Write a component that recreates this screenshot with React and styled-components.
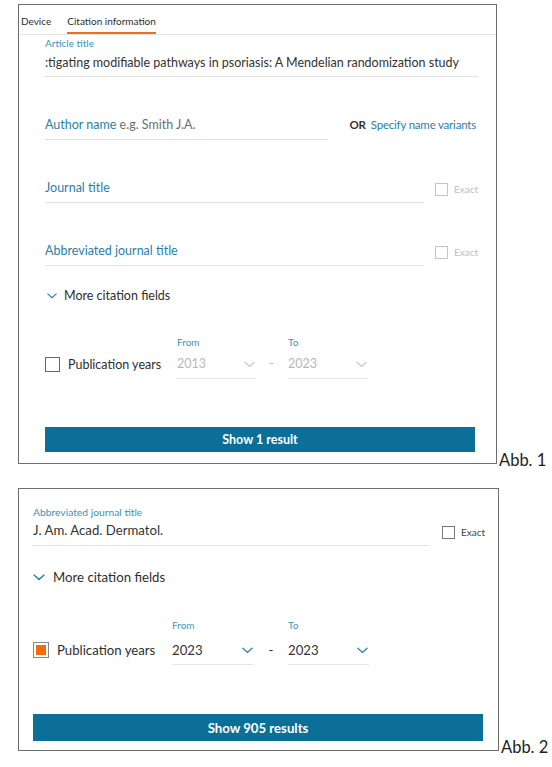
import React from 'react'
import styled, { createGlobalStyle } from 'styled-components'

const GlobalStyle = createGlobalStyle`
  body {
    margin: 0;
    background: #fff;
    font-family: Lato, "Liberation Sans", sans-serif;
    color: #2e2e2e;
  }
`

const Page = styled.div`
  display: flex;
  flex-direction: column;
  gap: 24px;
  padding: 4px 0 15px 18px;
`

const Figure = styled.div`
  display: flex;
  align-items: flex-end;
`

const Frame = styled.div`
  --fs: ${p => p.$fs}px;
  width: ${p => p.$w}px;
  box-sizing: border-box;
  border: 1px solid #6d6d6d;
  background: #fff;
  font-size: var(--fs);
`

const Caption = styled.div`
  font-size: 16.5px;
  line-height: 1;
  margin: 0 0 -4px 2px;
  color: #222;
`

const Tabs = styled.div`
  display: flex;
  gap: 16px;
  height: 29px;
  padding-left: 2px;
  border-bottom: 1px solid #e4e4e4;
  font-size: 10px;
`

const Tab = styled.div`
  display: flex;
  align-items: center;
  padding-top: 5px;
  box-sizing: border-box;
  border-bottom: 2px solid ${p => (p.$active ? '#e9711c' : 'transparent')};
`

const Body = styled.div`
  display: flex;
  flex-direction: column;
  padding: ${p => p.$pad};
`

const Row = styled.div`
  display: flex;
  align-items: flex-start;
  margin-top: ${p => p.$mt || 0}px;
`

const Field = styled.div`
  display: flex;
  flex-direction: column;
  width: ${p => (p.$w ? `${p.$w}px` : '100%')};
  padding-bottom: ${p => p.$pb || 5}px;
  border-bottom: 1px solid #e2e2e2;
`

const SmallLabel = styled.div`
  font-size: ${p => p.$size || 10}px;
  line-height: 12px;
  color: #3a95b8;
  margin-bottom: ${p => p.$gap || 0}px;
`

const Value = styled.div`
  line-height: 18px;
  white-space: nowrap;
  overflow: hidden;
  color: ${p => (p.$muted ? '#b8b8b8' : '#333')};
`

const Prompt = styled.span`
  color: #2a7fa8;
`

const Hint = styled.span`
  color: #6e6e6e;
`

const OrText = styled.div`
  margin-left: auto;
  margin-right: 2px;
  line-height: 18px;
  font-size: 11.5px;
  letter-spacing: -0.2px;
  b {
    font-weight: 700;
    color: #333;
    margin-right: 5px;
  }
`

const Exact = styled.label`
  display: flex;
  align-items: center;
  gap: 6px;
  height: 18px;
  align-self: flex-end;
  margin: 0 0 5px ${p => p.$ml}px;
  font-size: 10px;
  color: ${p => (p.$muted ? '#bdbdbd' : '#444')};
`

const Box = styled.span`
  display: inline-block;
  box-sizing: border-box;
  width: ${p => p.$size}px;
  height: ${p => p.$size}px;
  border: 1px solid ${p => p.$border};
  background: ${p => (p.$checked ? '#f5690f' : '#fff')};
  box-shadow: ${p => (p.$checked ? 'inset 0 0 0 2px #fff' : 'none')};
  flex-shrink: 0;
`

const More = styled.div`
  display: flex;
  align-items: center;
  gap: ${p => p.$gap}px;
  padding-left: ${p => p.$indent}px;
  line-height: 18px;
  margin-top: ${p => p.$mt}px;
`

const YearsRow = styled.div`
  display: flex;
  align-items: flex-end;
  margin-top: ${p => p.$mt}px;
`

const PubGroup = styled.div`
  display: flex;
  align-items: center;
  gap: 8px;
  width: ${p => p.$w}px;
  height: 18px;
  margin-bottom: 6px;
`

const Select = styled.div`
  display: flex;
  flex-direction: column;
  width: ${p => p.$w}px;
`

const SelectValue = styled.div`
  display: flex;
  align-items: center;
  justify-content: space-between;
  line-height: 18px;
  padding: 0 ${p => p.$pr}px 5px 0;
  border-bottom: 1px solid #e6e6e6;
  color: ${p => (p.$muted ? '#b8b8b8' : '#333')};
`

const Dash = styled.div`
  width: ${p => p.$w}px;
  text-align: center;
  line-height: 18px;
  margin-bottom: 6px;
  color: ${p => (p.$muted ? '#b8b8b8' : '#333')};
`

const Button = styled.div`
  width: ${p => p.$w}px;
  height: ${p => p.$h}px;
  margin-top: ${p => p.$mt}px;
  background: #0b6f98;
  color: #fff;
  font-weight: 700;
  display: flex;
  align-items: center;
  justify-content: center;
`

const Chevron = ({ color, w = 11 }) => (
  <svg width={w} height={Math.round(w * 0.6)} viewBox="0 0 12 7" fill="none">
    <path d="M1 1l5 4.6L11 1" stroke={color} strokeWidth="1.4" strokeLinecap="round" />
  </svg>
)

const Years = ({ disabled, mt, pubW, box, gap, fromW, dashW, toW, pr }) => {
  const chev = disabled ? '#c9c9c9' : '#2a7fa8'
  return (
    <YearsRow $mt={mt}>
      <PubGroup $w={pubW}>
        <Box $size={box} $border={disabled ? '#666' : '#888'} $checked={!disabled} />
        <span>Publication years</span>
      </PubGroup>
      <Select $w={fromW}>
        <SmallLabel $gap={gap}>From</SmallLabel>
        <SelectValue $muted={disabled} $pr={pr}>
          <span>{disabled ? '2013' : '2023'}</span>
          <Chevron color={chev} w={11} />
        </SelectValue>
      </Select>
      <Dash $w={dashW} $muted={disabled}>-</Dash>
      <Select $w={toW}>
        <SmallLabel $gap={gap}>To</SmallLabel>
        <SelectValue $muted={disabled} $pr={pr}>
          <span>2023</span>
          <Chevron color={chev} w={11} />
        </SelectValue>
      </Select>
    </YearsRow>
  )
}

export default function App() {
  return (
    <>
      <GlobalStyle />
      <Page>
        <Figure>
          <Frame $w={479} $fs={12.5}>
            <Tabs>
              <Tab>Device</Tab>
              <Tab $active>Citation information</Tab>
            </Tabs>
            <Body $pad="2px 18px 11px 26px">
              <Field $pb={4}>
                <SmallLabel $gap={5}>Article title</SmallLabel>
                <Value>:tigating modifiable pathways in psoriasis: A Mendelian randomization study</Value>
              </Field>
              <Row $mt={39}>
                <Field $w={283}>
                  <Value>
                    <Prompt>Author name</Prompt> <Hint>e.g. Smith J.A.</Hint>
                  </Value>
                </Field>
                <OrText>
                  <b>OR</b>
                  <Prompt>Specify name variants</Prompt>
                </OrText>
              </Row>
              <Row $mt={39}>
                <Field $w={379}>
                  <Value><Prompt>Journal title</Prompt></Value>
                </Field>
                <Exact $ml={11} $muted>
                  <Box $size={13} $border="#c4c4c4" />
                  Exact
                </Exact>
              </Row>
              <Row $mt={39}>
                <Field $w={379}>
                  <Value><Prompt>Abbreviated journal title</Prompt></Value>
                </Field>
                <Exact $ml={11} $muted>
                  <Box $size={13} $border="#c4c4c4" />
                  Exact
                </Exact>
              </Row>
              <More $mt={21} $gap={7} $indent={2}>
                <Chevron color="#2a7fa8" w={10} />
                More citation fields
              </More>
              <Years disabled mt={31} pubW={132} box={15} gap={7} fromW={78} dashW={33} toW={79} pr={0} />
              <Button $w={430} $h={25} $mt={48}>Show 1 result</Button>
            </Body>
          </Frame>
          <Caption>Abb. 1</Caption>
        </Figure>

        <Figure>
          <Frame $w={481} $fs={13.2}>
            <Body $pad="17px 13px 9px 14px">
              <Row>
                <Field $w={397} $pb={6}>
                  <SmallLabel $size={10.3} $gap={3}>Abbreviated journal title</SmallLabel>
                  <Value>J. Am. Acad. Dermatol.</Value>
                </Field>
                <Exact $ml={12}>
                  <Box $size={13} $border="#777" />
                  Exact
                </Exact>
              </Row>
              <More $mt={22} $gap={8} $indent={0}>
                <Chevron color="#2a7fa8" w={12} />
                More citation fields
              </More>
              <Years mt={33} pubW={139} box={16} gap={10} fromW={82} dashW={34} toW={81} pr={1} />
              <Button $w={450} $h={27} $mt={49}>Show 905 results</Button>
            </Body>
          </Frame>
          <Caption>Abb. 2</Caption>
        </Figure>
      </Page>
    </>
  )
}
